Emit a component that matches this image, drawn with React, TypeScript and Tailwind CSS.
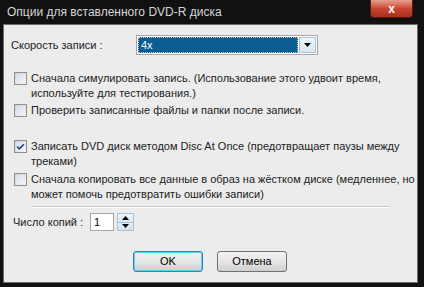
import { Check } from "lucide-react";

function Box({ checked }: { checked?: boolean }) {
  return (
    <div className="mt-[1px] flex h-[13px] w-[13px] shrink-0 items-center justify-center border border-[#8e8f8f] bg-gradient-to-br from-[#cbcfd5] to-[#f6f6f6]">
      <div className="flex h-[9px] w-[9px] items-center justify-center bg-gradient-to-br from-[#d5dee8] to-[#f4f7fa]">
        {checked && <Check className="h-[10px] w-[10px] text-[#1c3f95]" strokeWidth={4} />}
      </div>
    </div>
  );
}

function Option({ checked, children }: { checked?: boolean; children: React.ReactNode }) {
  return (
    <div className="flex items-start gap-[4px] pl-[10px]">
      <Box checked={checked} />
      <p className="leading-[15px]">{children}</p>
    </div>
  );
}

function Btn({ children, focus }: { children: React.ReactNode; focus?: boolean }) {
  return (
    <button
      className={
        "h-[21px] w-[70px] rounded-[3px] border bg-gradient-to-b from-[#f2f2f2] via-[#e6e6e6] to-[#cfcfcf] text-[11px] text-black " +
        (focus ? "border-[#3c7fb1] shadow-[inset_0_0_0_1px_#48d8fb]" : "border-[#707070]")
      }
    >
      {children}
    </button>
  );
}

function Tri({ up }: { up?: boolean }) {
  return (
    <svg width="7" height="4" viewBox="0 0 7 4">
      <path d={up ? "M0 4 L3.5 0 L7 4 Z" : "M0 0 L7 0 L3.5 4 Z"} fill="#000" />
    </svg>
  );
}

export default function App() {
  return (
    <div
      className="flex h-[287px] w-[424px] flex-col bg-[#111] text-[11px] text-[#222]"
      style={{ fontFamily: '"Liberation Sans", Arial, sans-serif' }}
    >
      <div className="relative flex h-[24px] items-center px-[7px]">
        <span className="text-[12px] text-[#d6d6d6]">Опции для вставленного DVD-R диска</span>
        <div className="absolute right-[11px] top-0 flex h-[18px] w-[43px] items-center justify-center rounded-b-[4px] border border-t-0 border-[#5a1a10] bg-gradient-to-b from-[#e6a08f] via-[#c9452f] to-[#a8301c]">
          <span className="text-[12px] font-bold text-white">x</span>
        </div>
      </div>
      <div className="mx-[3px] mb-[4px] mr-[6px] flex flex-1 flex-col border border-[#6b6b6b] bg-[#ececec]">
        <div className="flex items-center pl-[7px] pt-[10px]">
          <span className="w-[125px]">Скорость записи :</span>
          <div className="flex h-[20px] w-[182px] items-center border border-[#a7a7a7] bg-white p-[1px]">
            <div className="flex h-full flex-1 items-center border border-dotted border-[#c9c9c9] bg-[#0b5e93] pl-[2px] text-white">
              4x
            </div>
            <div className="ml-[1px] flex h-full w-[17px] items-center justify-center border border-[#a8c2d7] bg-gradient-to-b from-[#f0f6fb] to-[#d6e6f3]">
              <Tri />
            </div>
          </div>
        </div>
        <div className="mt-[16px] flex flex-col gap-[2px]">
          <Option>
            Сначала симулировать запись. (Использование этого удвоит время,
            <br />
            используйте для тестирования.)
          </Option>
          <Option>Проверить записанные файлы и папки после записи.</Option>
        </div>
        <div className="mt-[21px] flex flex-col gap-[3px]">
          <Option checked>
            Записать DVD диск методом Disc At Once (предотвращает паузы между
            <br />
            треками)
          </Option>
          <Option>
            Сначала копировать все данные в образ на жёстком диске (медленнее, но
            <br />
            может помочь предотвратить ошибки записи)
          </Option>
        </div>
        <div className="ml-[28px] mt-[4px] h-[2px] w-[358px] border-t border-b border-t-[#c8c8c8] border-b-white" />
        <div className="mt-[5px] flex items-center pl-[9px]">
          <span className="w-[77px]">Число копий :</span>
          <div className="flex h-[18px] w-[24px] items-center border border-[#a7a7a7] bg-white pl-[3px] text-black">1</div>
          <div className="ml-[3px] flex h-[18px] w-[17px] flex-col">
            <div className="flex flex-1 items-center justify-center border border-[#a8c2d7] bg-gradient-to-b from-[#f0f6fb] to-[#dbe8f3]">
              <Tri up />
            </div>
            <div className="flex flex-1 items-center justify-center border border-t-0 border-[#a8c2d7] bg-gradient-to-b from-[#e6eff7] to-[#d1e2f0]">
              <Tri />
            </div>
          </div>
        </div>
        <div className="mt-[20px] flex justify-center gap-[14px] pr-[1px]">
          <Btn focus>OK</Btn>
          <Btn>Отмена</Btn>
        </div>
      </div>
    </div>
  );
}
